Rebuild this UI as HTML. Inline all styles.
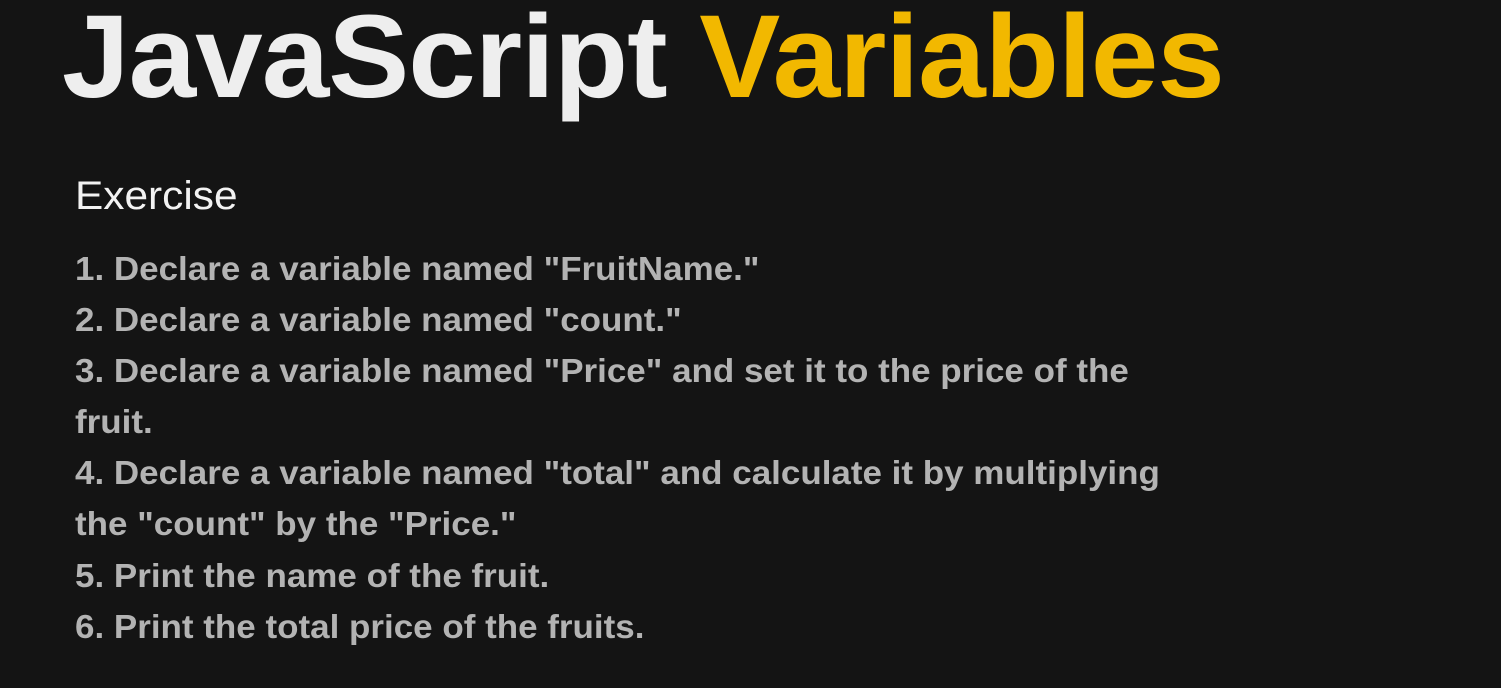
<!DOCTYPE html>
<html><head><meta charset="utf-8"><style>
html,body{margin:0;padding:0;background:#141414;width:1501px;height:688px;overflow:hidden}
body{position:relative;font-family:"Liberation Sans",sans-serif}
.t{position:absolute;left:62px;top:-11px;font-size:118px;font-weight:bold;white-space:nowrap;transform:scaleX(1.03);transform-origin:left top;letter-spacing:-1px}
.w{color:#eeeeee}.y{color:#f2b800}
.ex{position:absolute;left:75px;top:174px;font-size:40px;color:#f2f2f2;transform:scaleX(1.06);transform-origin:left top}
.l{position:absolute;left:75px;font-size:33px;font-weight:bold;color:#b3b3b3;white-space:nowrap;transform:scaleX(1.06);transform-origin:left top}
</style></head><body>
<div class="t"><span class="w">JavaScript</span> <span class="y">Variables</span></div>
<div class="ex">Exercise</div>
<div class="l" style="top:250px">1. Declare a variable named "FruitName."</div>
<div class="l" style="top:301px">2. Declare a variable named "count."</div>
<div class="l" style="top:352px">3. Declare a variable named "Price" and set it to the price of the</div>
<div class="l" style="top:403px">fruit.</div>
<div class="l" style="top:454px">4. Declare a variable named "total" and calculate it by multiplying</div>
<div class="l" style="top:505px">the "count" by the "Price."</div>
<div class="l" style="top:557px">5. Print the name of the fruit.</div>
<div class="l" style="top:608px">6. Print the total price of the fruits.</div>
</body></html>
